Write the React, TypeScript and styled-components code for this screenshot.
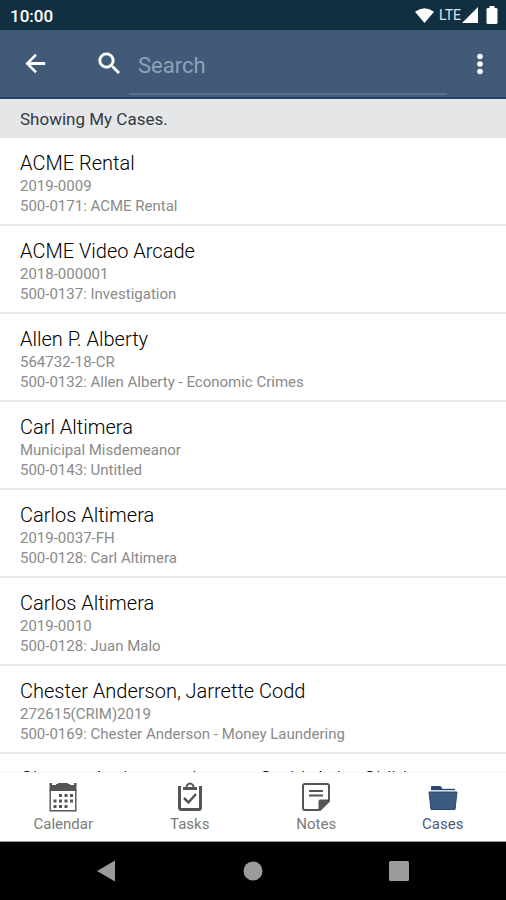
import React from "react";
import styled, { createGlobalStyle } from "styled-components";

const GlobalStyle = createGlobalStyle`
  * { box-sizing: border-box; }
  body { margin: 0; font-family: Roboto, "Liberation Sans", sans-serif; background: #fff; }
  button, input { font-family: inherit; }
`;

const Screen = styled.div`
  display: flex;
  flex-direction: column;
  height: 100vh;
  overflow: hidden;
`;

const StatusBar = styled.div`
  flex: none;
  display: flex;
  align-items: center;
  justify-content: space-between;
  height: 30px;
  padding: 0 5px 0 10px;
  background: #122f42;
  color: #fff;
`;

const Clock = styled.span`
  padding-top: 2px;
  font-size: 17px;
  font-weight: 500;
  line-height: 28px;
`;

const StatusIcons = styled.div`
  display: flex;
  align-items: center;
  gap: 5px;
  font-size: 15px;
  svg { display: block; }
`;

const Signal = styled.span`
  display: flex;
  align-items: center;
  gap: 1px;
  color: #dde3e8;
  font-size: 14px;
`;

const AppBar = styled.header`
  flex: none;
  display: flex;
  align-items: center;
  height: 69px;
  padding: 0 13px 0 21px;
  background: #405a77;
  border-bottom: 2px solid #1e4568;
  color: #fff;
`;

const IconButton = styled.button`
  flex: none;
  display: flex;
  padding: 0;
  border: 0;
  background: none;
  color: inherit;
  cursor: pointer;
`;

const SearchBox = styled.label`
  flex: 1;
  min-width: 0;
  display: flex;
  align-items: center;
  gap: 5px;
  margin: 0 20px 0 45px;
  svg { flex: none; }
`;

const SearchInput = styled.input`
  flex: 1;
  min-width: 0;
  height: 56px;
  margin-top: 7px;
  padding: 0 9px 2px;
  border: 0;
  border-bottom: 2px solid #54708d;
  outline: 0;
  background: transparent;
  color: #fff;
  font-size: 22px;
  &::placeholder { color: #8fa3b8; opacity: 1; }
`;

const Notice = styled.p`
  flex: none;
  margin: 0;
  padding: 1px 20px 0;
  background: #e5e6e8;
  color: #333a42;
  font-size: 17px;
  line-height: 38px;
`;

const CaseList = styled.ul`
  flex: 1;
  min-height: 0;
  margin: 0;
  padding: 0;
  overflow: hidden;
  list-style: none;
`;

const CaseRow = styled.li`
  height: 88px;
  padding: 12px 20px 0;
  border-bottom: 2px solid #e8e8e8;
  white-space: nowrap;
`;

const CaseName = styled.h2`
  margin: 0;
  color: #000;
  font-size: 20px;
  font-weight: 300;
  line-height: 26px;
`;

const CaseDetail = styled.p`
  margin: 0;
  color: #8a8a8a;
  font-size: 15px;
  line-height: 20px;
`;

const TabBar = styled.nav`
  flex: none;
  display: grid;
  grid-template-columns: repeat(4, 1fr);
  height: 70px;
  border-top: 1px solid #f5f5f5;
  border-bottom: 1px solid #999;
  background: #fff;
`;

const Tab = styled.button<{ $active?: boolean }>`
  display: flex;
  flex-direction: column;
  align-items: center;
  gap: 2px;
  padding: 9px 0 0;
  border: 0;
  background: none;
  color: ${(p) => (p.$active ? "#4a5b80" : "#7a7a7a")};
  font-size: 15px;
  line-height: 20px;
  cursor: pointer;
  svg { display: block; flex: none; }
`;

const SystemBar = styled.div`
  flex: none;
  display: flex;
  align-items: center;
  justify-content: center;
  gap: 118px;
  height: 58px;
  background: #000;
  color: #9b9b9b;
`;

const cases = [
  ["ACME Rental", "2019-0009", "500-0171: ACME Rental"],
  ["ACME Video Arcade", "2018-000001", "500-0137: Investigation"],
  ["Allen P. Alberty", "564732-18-CR", "500-0132: Allen Alberty - Economic Crimes"],
  ["Carl Altimera", "Municipal Misdemeanor", "500-0143: Untitled"],
  ["Carlos Altimera", "2019-0037-FH", "500-0128: Carl Altimera"],
  ["Carlos Altimera", "2019-0010", "500-0128: Juan Malo"],
  ["Chester Anderson, Jarrette Codd", "272615(CRIM)2019", "500-0169: Chester Anderson - Money Laundering"],
  ["Chester Anderson, Jarrette Codd, Ashe Child", "", ""],
];

const BackIcon = () => (
  <svg width="29" height="29" viewBox="0 0 24 24" fill="currentColor">
    <path d="M20 10.800H7.830l5.300-5.300L11.700 4l-8 8 8 8 1.430-1.500L7.830 13.200H20z" />
  </svg>
);

const SearchIcon = () => (
  <svg width="29" height="29" viewBox="0 0 24 24" fill="currentColor">
    <path d="M15.500 14h-.79l-.28-.27A6.470 6.470 0 0 0 16 9.500 6.500 6.500 0 1 0 9.500 16c1.610 0 3.090-.59 4.230-1.570l.27.28v.79l5 4.990L20.490 19zm-6 0a4.500 4.500 0 1 1 0-9 4.500 4.500 0 0 1 0 9z" stroke="currentColor" strokeWidth=".4" />
  </svg>
);

const MoreIcon = () => (
  <svg width="26" height="26" viewBox="0 0 26 26" fill="currentColor">
    <circle cx="13" cy="5.500" r="2.800" />
    <circle cx="13" cy="13" r="2.800" />
    <circle cx="13" cy="20.500" r="2.800" />
  </svg>
);

const CalendarIcon = () => (
  <svg width="28" height="30" viewBox="0 0 28 30" fill="#555">
    <path d="M0.500 1H3v2h4V2h2V1h10v1h2v1h4V1h2.500v8h-27z" />
    <path d="M1.200 8v20.800h25.600V8" fill="none" stroke="#555" strokeWidth="1.400" />
    <path d="M10 12h3v3h-3zM15.500 12h3v3h-3zM21 12h3v3h-3zM4.500 17.500h3v3h-3zM10 17.500h3v3h-3zM15.500 17.500h3v3h-3zM21 17.500h3v3h-3zM4.500 23h3v3h-3zM10 23h3v3h-3zM15.500 23h3v3h-3z" />
  </svg>
);

const TasksIcon = () => (
  <svg width="28" height="30" viewBox="0 0 28 30" fill="none" stroke="#555">
    <path d="M3.500 4v21.500q0 2 2 2h17q2 0 2-2V4" strokeWidth="3" />
    <path d="M10.500 5.500a3.500 4 0 0 1 7 0" strokeWidth="2" />
    <path d="M7 5h14v3H7z" fill="#555" stroke="none" />
    <path d="M8 16l4.500 4.500L20 12" strokeWidth="2.500" />
  </svg>
);

const NotesIcon = () => (
  <svg width="28" height="30" viewBox="0 0 28 30" fill="none" stroke="#555">
    <path d="M3 2h22q2 0 2 2v15l-9 9H3q-2 0-2-2V4q0-2 2-2z" strokeWidth="2" />
    <path d="M17 28v-9q0-1 1-1h9v1l-9 9z" fill="#555" />
    <path d="M7 9h14M7 13.500h14" strokeWidth="2" />
  </svg>
);

const CasesIcon = () => (
  <svg width="30" height="30" viewBox="0 0 30 30" fill="#3d5a80">
    <path d="M3 8V5q0-1 1-1h8q1 0 2 2h13v2z" fill="#244a70" />
    <path d="M3 8.500h25M14 6.500h13" stroke="#d3dbe4" />
    <path d="M1 10h28l-2 17.500H3z" stroke="#244a70" />
  </svg>
);

const tabs = [
  { label: "Calendar", icon: <CalendarIcon /> },
  { label: "Tasks", icon: <TasksIcon /> },
  { label: "Notes", icon: <NotesIcon /> },
  { label: "Cases", icon: <CasesIcon />, active: true },
];

export default function App() {
  return (
    <Screen>
      <GlobalStyle />
      <StatusBar>
        <Clock>10:00</Clock>
        <StatusIcons>
          <svg width="19" height="17" viewBox="0 0 20 17" fill="#fff">
            <path d="M0 4.500Q10-3 20 4.500L10 16.500z" />
          </svg>
          <Signal>
            <span>LTE</span>
            <svg width="16" height="16" viewBox="0 0 16 16" fill="#fff"><path d="M16 0v16H0z" /></svg>
          </Signal>
          <svg width="18" height="18" viewBox="0 0 18 18" fill="#fff">
            <path d="M6.500 0h5v2H13q1.500 0 1.500 1v14q0 1-1.500 1H5q-1.500 0-1.500-1V3q0-1 1.500-1h1.500z" />
          </svg>
        </StatusIcons>
      </StatusBar>
      <AppBar>
        <IconButton aria-label="Back"><BackIcon /></IconButton>
        <SearchBox>
          <SearchIcon />
          <SearchInput type="search" placeholder="Search" aria-label="Search" />
        </SearchBox>
        <IconButton aria-label="More options"><MoreIcon /></IconButton>
      </AppBar>
      <Notice>Showing My Cases.</Notice>
      <CaseList>
        {cases.map(([name, number, file], i) => (
          <CaseRow key={i}>
            <CaseName>{name}</CaseName>
            {number && <CaseDetail>{number}</CaseDetail>}
            {file && <CaseDetail>{file}</CaseDetail>}
          </CaseRow>
        ))}
      </CaseList>
      <TabBar>
        {tabs.map((t) => (
          <Tab key={t.label} $active={t.active} aria-current={t.active ? "page" : undefined}>
            {t.icon}
            {t.label}
          </Tab>
        ))}
      </TabBar>
      <SystemBar>
        <IconButton aria-label="System back">
          <svg width="28" height="24" viewBox="0 0 28 24" fill="currentColor"><path d="M22 1.500v21L4 12z" /></svg>
        </IconButton>
        <IconButton aria-label="Home">
          <svg width="28" height="24" viewBox="0 0 28 24" fill="currentColor"><circle cx="14" cy="12" r="9.500" /></svg>
        </IconButton>
        <IconButton aria-label="Recent apps">
          <svg width="28" height="24" viewBox="0 0 28 24" fill="currentColor"><rect x="4" y="2" width="20" height="20" rx="1.500" /></svg>
        </IconButton>
      </SystemBar>
    </Screen>
  );
}
